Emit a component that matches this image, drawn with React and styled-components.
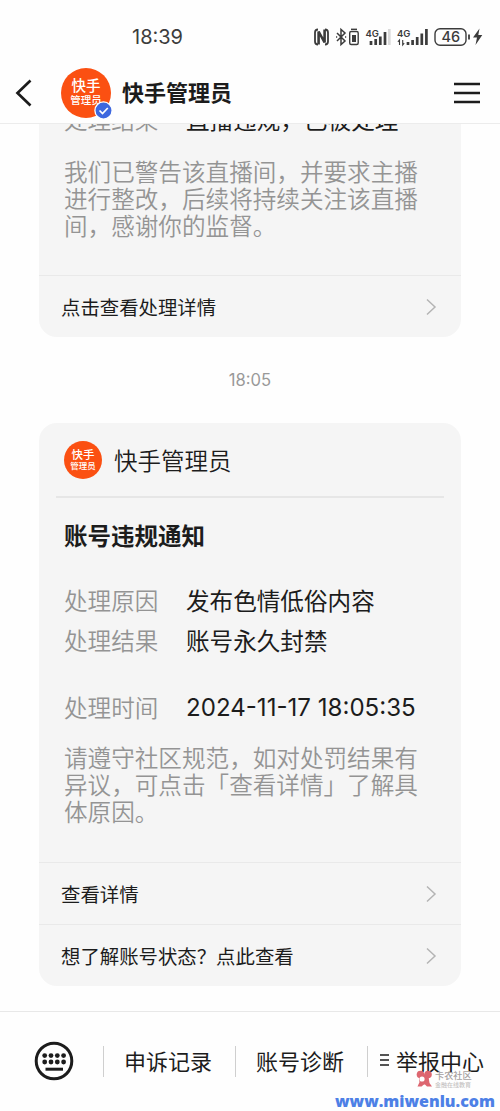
import { Fragment } from 'react';
import styled, { createGlobalStyle } from 'styled-components';

const GlobalStyle = createGlobalStyle`
  * {
    box-sizing: border-box;
  }

  body {
    margin: 0;
    background: #fefefe;
    color: #1c1c1c;
    font-family: 'Noto Sans CJK SC', sans-serif;
    overflow: hidden;
  }
`;

const Screen = styled.div`
  width: 500px;
  height: 1111px;
  display: flex;
  flex-direction: column;
  overflow: hidden;
`;

const StatusBar = styled.div`
  height: 66px;
  flex: none;
  padding: 9px 17px 0 132px;
  display: flex;
  justify-content: space-between;
  align-items: flex-start;
`;

const Clock = styled.div`
  font-family: Inter, sans-serif;
  font-size: 20px;
  line-height: 57px;
  color: #3c3c3c;
`;

const StatusIcons = styled.svg`
  width: 170px;
  height: 24px;
  margin-top: 16px;
`;

const Header = styled.div`
  height: 58px;
  flex: none;
  padding: 0 20px 4px 15px;
  display: flex;
  align-items: center;
  border-bottom: 1px solid #ececec;
`;

const HeaderAvatar = styled.div`
  position: relative;
  margin: 0 11px 0 28px;
`;

const Badge = styled.svg`
  position: absolute;
  right: -2px;
  bottom: -2px;
  width: 19px;
  height: 19px;
`;

const Avatar = styled.div`
  width: ${({ size }) => size}px;
  height: ${({ size }) => size}px;
  border-radius: 50%;
  background: #fb5012;
  color: #fff;
  display: flex;
  flex-direction: column;
  align-items: center;
  justify-content: center;
  padding-bottom: 1px;
  font-weight: 500;
`;

const AvatarLine = styled.span`
  font-size: ${({ size }) => size}px;
  line-height: ${({ height }) => height}px;
  white-space: nowrap;
`;

const HeaderTitle = styled.div`
  flex: 1;
  font-size: 22px;
  line-height: 30px;
  font-weight: 700;
  margin-top: -3px;
`;

const Messages = styled.div`
  flex: 1;
  min-height: 0;
  overflow: hidden;
  padding: 0 39px;
`;

const Card = styled.div`
  background: #f5f5f5;
  border-radius: ${({ cut }) => (cut ? '0 0 18px 18px' : '18px')};
`;

const Body = styled.div`
  height: ${({ height }) => height}px;
  padding: 0 25px;
  overflow: hidden;
`;

const Field = styled.div`
  display: flex;
  margin-top: ${({ top }) => top}px;
  font-size: 23.6px;
  line-height: 40px;
  white-space: nowrap;
`;

const Label = styled.span`
  width: 122px;
  color: #949494;
  font-weight: 350;
`;

const Value = styled.span`
  ${({ numeric }) => numeric && "font-family: Inter, sans-serif; font-size: 24.1px; padding-top: 1px; height: 40px;"}
`;

const Note = styled.div`
  margin-top: ${({ top }) => top}px;
  font-size: 23.6px;
  line-height: 27px;
  font-weight: 350;
  color: #949494;
  white-space: nowrap;
`;

const LinkRow = styled.div`
  height: 62px;
  padding: 0 24px 0 22px;
  display: flex;
  align-items: center;
  justify-content: space-between;
  border-top: 1px solid #e9e9e9;
  font-size: 19.4px;
`;

const Time = styled.div`
  height: 86px;
  line-height: 86px;
  text-align: center;
  font-family: Inter, sans-serif;
  font-size: 16.6px;
  color: #999;
`;

const CardHead = styled.div`
  height: 75px;
  margin: 0 17px;
  padding-left: 8px;
  display: flex;
  align-items: center;
  gap: 12px;
  border-bottom: 2px solid #e6e6e6;
  font-size: 23.5px;
  font-weight: 350;
`;

const CardTitle = styled.div`
  margin-top: 17px;
  font-size: 23.5px;
  line-height: 40px;
  font-weight: 700;
`;

const Footer = styled.div`
  position: relative;
  height: 100px;
  flex: none;
  padding: 0 0 0 34px;
  display: flex;
  align-items: flex-start;
  border-top: 1px solid #e8e8e8;
`;

const Keyboard = styled.svg`
  width: 40px;
  height: 40px;
  margin: 29px 29px 0 0;
`;

const Divider = styled.div`
  width: 1px;
  height: 31px;
  margin-top: 34px;
  background: #cfcfcf;
`;

const MenuItem = styled.div`
  width: ${({ width }) => width}px;
  height: 96px;
  padding-right: 3px;
  display: flex;
  justify-content: center;
  align-items: center;
  gap: 7px;
  font-size: 22px;
  white-space: nowrap;
`;

const Watermark = styled.div`
  position: absolute;
  left: 416px;
  top: 58px;
  display: flex;
  gap: 2px;
`;

const WatermarkText = styled.div`
  color: #a5a0a0;
  font-size: 9.2px;
  line-height: 11px;
  font-weight: 500;
  white-space: nowrap;
`;

const WatermarkSub = styled.div`
  font-size: 6px;
  line-height: 7px;
  color: #c6c4c4;
`;

const Site = styled.div`
  position: absolute;
  left: 335px;
  top: 77px;
  font-family: 'Open Sans', sans-serif;
  font-size: 16px;
  line-height: 24px;
  font-weight: 800;
  color: #4d80e6;
`;

const Brand = ({ size, top, bottom }) => (
  <Avatar size={size}>
    <AvatarLine size={top} height={top + 1}>快手</AvatarLine>
    <AvatarLine size={bottom} height={size > 40 ? bottom + 5 : bottom + 2}>管理员</AvatarLine>
  </Avatar>
);

const Link = ({ children }) => (
  <LinkRow>
    <span>{children}</span>
    <svg width="12" height="18" viewBox="0 0 12 18" fill="none" stroke="#b4b4b4" strokeWidth="1.5">
      <path d="M2 1.5 10 9l-8 7.5" />
    </svg>
  </LinkRow>
);

const PhoneStatus = () => (
  <StatusIcons viewBox="313 25 170 24" fill="none" stroke="#3c3c3c">
    <path d="M318 29.5q-3 0-3 3v9q0 3 3 3M325 29.5q3 0 3 3v9q0 3-3 3" strokeWidth="1.8" />
    <path d="M318.6 44.5V31.5l6 11V29.5" strokeWidth="2.6" />
    <path d="m337 33 8 8-4 3.5v-15l4 3.5-8 8" strokeWidth="1.5" />
    <path d="M336 37h1.2M345 37h1.2" strokeWidth="1.6" />
    <rect x="349.7" y="31.5" width="8.5" height="13" rx="1.5" strokeWidth="1.4" />
    <path d="M351 29.3h6" strokeWidth="1.4" />
    <path d="M352 35h4v7h-4z" fill="#3c3c3c" stroke="none" />
    <g strokeWidth="2.7">
      <path d="M371 45v-4M375.7 45v-6M380.3 45v-8.5M385 45V32" />
      <path d="M389.3 45V29" stroke="#d9d9d9" />
      <path d="M408 45v-3M412.6 45v-5M417.2 45v-8M421.8 45V33.5M426.4 45V29" />
    </g>
    <path d="M399.5 45v-5l-1.6 1.8M402.7 40v5l1.5-1.8" strokeWidth="1.1" />
    <g fill="#3c3c3c" stroke="none" fontFamily="Inter, sans-serif" fontWeight="600">
      <text x="365.5" y="36.5" fontSize="9.5">4G</text>
      <text x="397" y="36.5" fontSize="9.5">4G</text>
      <text x="441.5" y="42.3" fontSize="14.5" fontWeight="500">46</text>
    </g>
    <rect x="435" y="28.7" width="31" height="16.5" rx="5" strokeWidth="1.4" />
    <path d="M469 34.5v5" strokeWidth="1.8" />
    <path d="m479.5 28.5-6.5 9h4l-1.5 7.5 6.8-10h-4z" fill="#3c3c3c" stroke="none" />
  </StatusIcons>
);

const menu = [
  { label: '申诉记录', width: 131 },
  { label: '账号诊断', width: 131 },
  { label: '举报中心', width: 131, list: true },
];

const App = () => {
  return (
    <Screen>
      <GlobalStyle />
      <StatusBar>
        <Clock>18:39</Clock>
        <PhoneStatus />
      </StatusBar>
      <Header>
        <svg width="18" height="28" viewBox="0 0 18 28" fill="none" stroke="#1c1c1c" strokeWidth="2.7">
          <path d="M15.5 1.5 2.5 14l13 12.5" />
        </svg>
        <HeaderAvatar>
          <Brand size={50} top={14.5} bottom={10.5} />
          <Badge viewBox="0 0 19 19">
            <circle cx="9.5" cy="9.5" r="8.6" fill="#3e68df" stroke="#fff" strokeWidth="1.3" />
            <path d="m5.5 9.5 3 3 5.3-5.5" fill="none" stroke="#fff" strokeWidth="1.7" />
          </Badge>
        </HeaderAvatar>
        <HeaderTitle>快手管理员</HeaderTitle>
        <svg width="26" height="22" viewBox="0 0 26 22" stroke="#1c1c1c" strokeWidth="2.4">
          <path d="M0 2h26M0 11h26M0 20h26" />
        </svg>
      </Header>
      <Messages>
        <Card cut>
          <Body height={151}>
            <Field top={-25}>
              <Label>处理结果</Label>
              <Value>直播违规，已被处理</Value>
            </Field>
            <Note top={19}>
              我们已警告该直播间，并要求主播<br />
              进行整改，后续将持续关注该直播<br />
              间，感谢你的监督。
            </Note>
          </Body>
          <Link>点击查看处理详情</Link>
        </Card>
        <Time>18:05</Time>
        <Card>
          <CardHead>
            <Brand size={38} top={11.5} bottom={8.5} />
            快手管理员
          </CardHead>
          <Body height={364}>
            <CardTitle>账号违规通知</CardTitle>
            <Field top={25}>
              <Label>处理原因</Label>
              <Value>发布色情低俗内容</Value>
            </Field>
            <Field top={0}>
              <Label>处理结果</Label>
              <Value>账号永久封禁</Value>
            </Field>
            <Field top={27}>
              <Label>处理时间</Label>
              <Value numeric>2024-11-17 18:05:35</Value>
            </Field>
            <Note top={16.5}>
              请遵守社区规范，如对处罚结果有<br />
              异议，可点击「查看详情」了解具<br />
              体原因。
            </Note>
          </Body>
          <Link>查看详情</Link>
          <Link>想了解账号状态？点此查看</Link>
        </Card>
      </Messages>
      <Footer>
        <Keyboard viewBox="0 0 40 40" fill="#1c1c1c">
          <circle cx="20" cy="20" r="17.8" fill="none" stroke="#1c1c1c" strokeWidth="3" />
          {[10.7, 17, 23.3, 29.6].map((x) => (
            <Fragment key={x}>
              <circle cx={x} cy="14.6" r="2.4" />
              <circle cx={x} cy="21" r="2.4" />
            </Fragment>
          ))}
          <path d="M11.5 26.7h17.5v3H11.5z" />
        </Keyboard>
        {menu.map(({ label, width, list }) => (
          <Fragment key={label}>
            <Divider />
            <MenuItem width={width}>
              {list && (
                <svg width="9" height="12" viewBox="0 0 9 12" stroke="#1c1c1c" strokeWidth="1.4">
                  <path d="M0 1h9M0 6h9M0 11h9" />
                </svg>
              )}
              {label}
            </MenuItem>
          </Fragment>
        ))}
        <Watermark>
          <svg width="17" height="18" viewBox="0 0 17 18">
            <g fill="#dd6670">
              <circle cx="4.5" cy="4.5" r="3.8" />
              <circle cx="12" cy="4.5" r="3.8" />
              <circle cx="8" cy="9.5" r="5" />
              <path d="M1.5 16.5 4.5 10l8.5 0 .5 3 2.5 3.5h-5L8.5 14l-3 2.5z" />
            </g>
            <circle cx="6" cy="9" r="2.6" fill="#fff" />
          </svg>
          <WatermarkText>
            卡农社区
            <WatermarkSub>金融在线教育</WatermarkSub>
          </WatermarkText>
        </Watermark>
        <Site>www.miwenlu.com</Site>
      </Footer>
    </Screen>
  );
};

export default App;
